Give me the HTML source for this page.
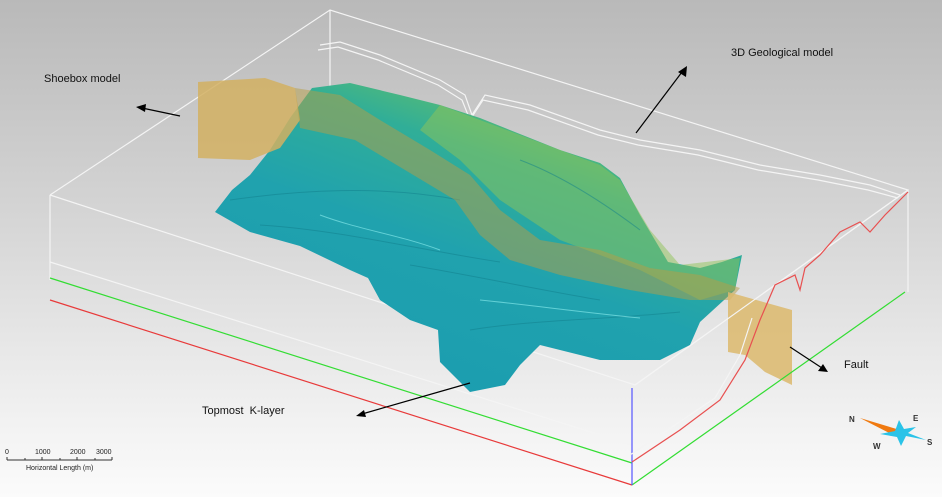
<!DOCTYPE html>
<html><head><style>
html,body{margin:0;padding:0}
body{width:942px;height:497px;overflow:hidden;background:linear-gradient(#b9b9b9 0%,#d6d6d6 45%,#f2f2f2 85%,#fbfbfb 100%);font-family:"Liberation Sans",sans-serif;position:relative}
.t{position:absolute;font-size:11px;color:#111}
</style></head><body>
<svg width="942" height="497" style="position:absolute;left:0;top:0">
<defs>
<linearGradient id="g" x1="0.2" y1="1" x2="0.8" y2="0">
<stop offset="0" stop-color="#1a9cb0"/>
<stop offset="0.45" stop-color="#20a2ae"/>
<stop offset="0.7" stop-color="#30ae98"/>
<stop offset="0.85" stop-color="#5dbd70"/>
<stop offset="1" stop-color="#2aa590"/>
</linearGradient>
</defs>
<g stroke="#f4f4f4" stroke-width="1.2" fill="none">
<polyline points="50,195 330,10 908,190 635,385 50,195"/>
<line x1="50" y1="195" x2="50" y2="280"/>
<line x1="330" y1="10" x2="330" y2="90"/>
<line x1="908" y1="190" x2="908" y2="292"/>
<line x1="50" y1="262" x2="632" y2="445"/>
<polyline points="320,45 340,42 380,55 440,80 465,95 472,115 485,95 530,105 600,130 640,140 700,150 760,165 820,175 870,185 900,195"/>
<polyline points="318,50 338,47 378,60 438,85 462,100 470,120 483,100 528,110 598,135 638,145 698,155 758,170 818,180 868,190 898,198"/>
</g>
<polygon fill="url(#g)" points="312,88 350,83 400,95 440,105 480,118 530,138 560,150 600,163 620,178 640,215 668,262 700,268 722,262 742,255 735,290 700,322 690,345 660,360 600,360 540,345 520,365 505,385 470,392 440,362 438,330 410,320 380,300 368,278 350,270 300,246 250,232 215,212 232,190 250,175 270,150 290,118"/>
<polygon fill="#8fc458" opacity="0.5" points="440,105 520,135 600,165 620,180 650,230 680,265 740,258 735,290 700,300 640,270 560,240 500,200 460,160 420,130"/>
<g stroke="#127f8c" stroke-width="1" opacity="0.5" fill="none">
<path d="M230,200 C300,190 380,185 460,200"/>
<path d="M260,225 C340,230 420,250 500,262"/>
<path d="M410,265 C470,275 540,290 600,300"/>
<path d="M470,330 C530,320 600,320 680,312"/>
<path d="M520,160 C560,175 600,200 640,230"/>
</g>
<g stroke="#8ff0f0" stroke-width="1" opacity="0.6" fill="none">
<path d="M320,215 C360,230 400,235 440,250"/>
<path d="M480,300 C530,305 580,312 640,318"/>
</g>
<polygon fill="#d2b062" opacity="0.85" points="198,82 265,78 295,88 300,120 280,148 250,160 198,158"/>
<polygon fill="#b59e45" opacity="0.5" points="295,88 340,95 380,120 430,150 470,175 500,210 540,240 600,250 650,268 700,275 740,288 730,300 690,300 630,290 560,275 510,260 480,235 455,200 405,170 355,140 300,128"/>
<polygon fill="#dcb86c" opacity="0.85" points="728,292 792,310 792,385 765,372 745,355 728,352"/>
<g fill="none" stroke-width="1.2">
<line x1="50" y1="278" x2="632" y2="463" stroke="#33dd33"/>
<line x1="632" y1="485" x2="905" y2="292" stroke="#33dd33"/>
<line x1="50" y1="300" x2="632" y2="485" stroke="#e83a3a"/>
<line x1="632" y1="388" x2="632" y2="485" stroke="#5555ff"/>
<line x1="635" y1="385" x2="908" y2="190" stroke="#f4f4f4"/>
<polyline stroke="#e85050" points="632,462 680,430 720,400 745,360 760,320 775,285 795,275 800,290 805,268 820,255 840,232 860,222 870,232 885,215 900,200 908,192"/>
<polyline stroke="#f4f4f4" points="630,455 675,425 715,398 740,355 752,318"/>
</g>
<g stroke="#000" stroke-width="1.2">
<line x1="180" y1="116" x2="142" y2="108"/>
<line x1="636" y1="133" x2="682" y2="72"/>
<line x1="790" y1="347" x2="822" y2="368"/>
<line x1="470" y1="383" x2="362" y2="414"/>
</g>
<g fill="#000">
<polygon points="136,107 146,104 145,112"/>
<polygon points="687,66 686,77 678,72"/>
<polygon points="828,372 818,371 823,364"/>
<polygon points="356,416 364,410 366,417"/>
</g>
<g stroke="#333" stroke-width="1" fill="none">
<line x1="7" y1="460" x2="112" y2="460"/>
<line x1="7" y1="457" x2="7" y2="460"/><line x1="25" y1="458" x2="25" y2="460"/>
<line x1="42" y1="457" x2="42" y2="460"/><line x1="60" y1="458" x2="60" y2="460"/>
<line x1="77" y1="457" x2="77" y2="460"/><line x1="95" y1="458" x2="95" y2="460"/>
<line x1="112" y1="457" x2="112" y2="460"/>
</g>
<g font-size="7" fill="#222" font-family="Liberation Sans,sans-serif">
<text x="5" y="454">0</text><text x="35" y="454">1000</text><text x="70" y="454">2000</text><text x="96" y="454">3000</text>
<text x="26" y="470">Horizontal Length (m)</text>
</g>
<polygon points="860,418 900,430 895,436" fill="#f07a10"/>
<polygon points="899,420 904,429 916,427 908,433 926,440 906,436 901,446 897,437 880,434 895,431" fill="#2ac3e8"/>
<g font-size="8" font-weight="bold" fill="#333" font-family="Liberation Sans,sans-serif">
<text x="849" y="422">N</text><text x="913" y="421">E</text><text x="873" y="449">W</text><text x="927" y="445">S</text>
</g>
</svg>
<div class="t" style="left:44px;top:73px">Shoebox model</div>
<div class="t" style="left:731px;top:47px">3D Geological model</div>
<div class="t" style="left:844px;top:359px">Fault</div>
<div class="t" style="left:202px;top:405px">Topmost&nbsp; K-layer</div>
</body></html>
